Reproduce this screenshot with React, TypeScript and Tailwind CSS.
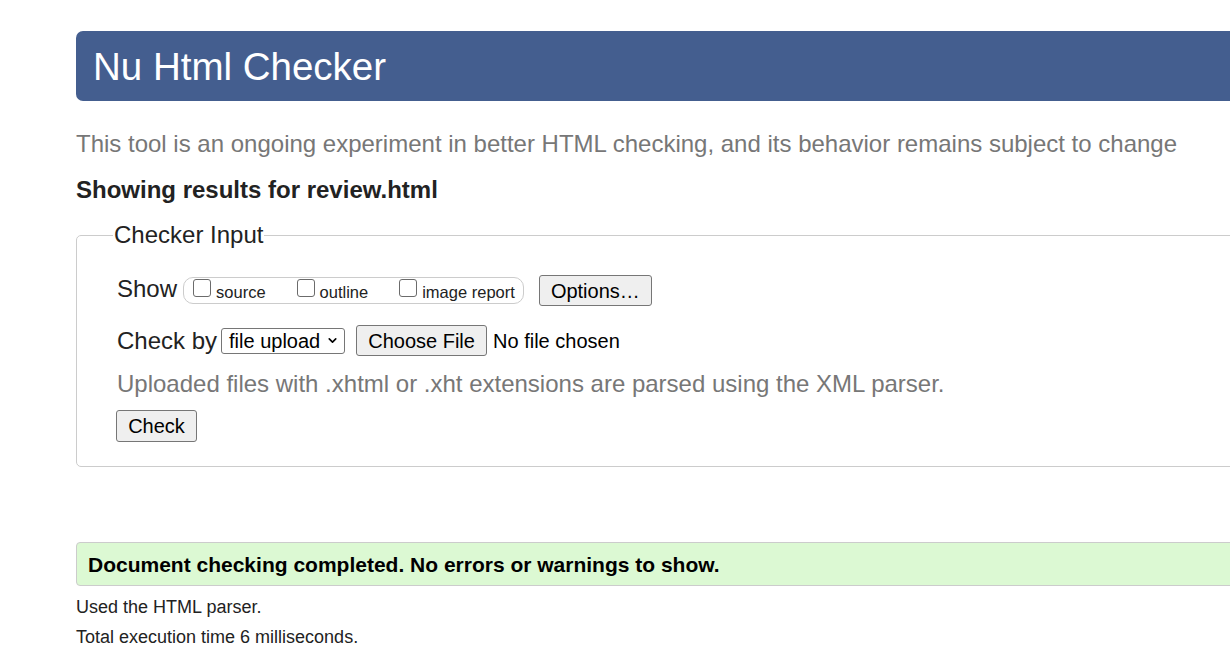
import { ChevronDown } from "lucide-react";

function Checkbox({ label }: { label: string }) {
  return (
    <span className="flex items-center gap-[5px]">
      <span className="w-[18px] h-[18px] border-[1.5px] border-[#6b6b6b] rounded-[3px] bg-white mb-[5px]"></span>
      <span className="text-[16.5px] leading-none mt-[4px]">{label}</span>
    </span>
  );
}

function Btn({ children, className = "" }: { children: React.ReactNode; className?: string }) {
  return (
    <span
      className={`flex items-center justify-center bg-[#efefef] border border-[#767676] rounded-[3px] text-[20px] text-black leading-none ${className}`}
    >
      {children}
    </span>
  );
}

export default function App() {
  return (
    <div className="w-[1230px] h-[657px] overflow-hidden bg-white font-['Liberation_Sans',Arial,sans-serif] text-[#222]">
      <div className="w-[1300px] pl-[76px] pt-[31px]">
        <h1 className="h-[70px] bg-[#445e8f] rounded-l-[7px] pl-[17px] pt-[3px] flex items-center text-white text-[38.5px] leading-none">
          Nu Html Checker
        </h1>

        <p className="mt-[31px] text-[24px] text-[#777] leading-none">
          This tool is an ongoing experiment in better HTML checking, and its behavior remains subject to change
        </p>

        <p className="mt-[22px] text-[24px] font-bold text-[#222] leading-none">Showing results for review.html</p>

        <fieldset className="mt-[21px] border border-[#ccc] rounded-[5px] pl-[40px] pb-[24px] pt-[12px]">
          <legend className="ml-[-4px] px-[1px] text-[24px] leading-none">Checker Input</legend>

          <div className="flex items-center mt-[16px]">
            <span className="text-[24px] leading-none mr-[6px] mb-[4px]">Show</span>
            <span className="flex items-center h-[27px] border border-[#ccc] rounded-[10px] pl-[9px] pr-[8px] gap-[31px] text-[#222]">
              <Checkbox label="source" />
              <Checkbox label="outline" />
              <Checkbox label="image report" />
            </span>
            <Btn className="ml-[15px] w-[113px] h-[31px]">Options…</Btn>
          </div>

          <div className="flex items-center mt-[19px]">
            <span className="text-[24px] leading-none mr-[4px]">Check by</span>
            <span className="flex items-center w-[124px] h-[26px] border border-[#767676] rounded-[3px] pl-[7px] pr-[5px] text-[20px] text-black leading-none">
              <span className="flex-1">file upload</span>
              <ChevronDown className="w-[13px] h-[13px]" strokeWidth={3} />
            </span>
            <Btn className="ml-[11px] w-[131px] h-[31px]">Choose File</Btn>
            <span className="ml-[6px] text-[20px] text-black leading-none">No file chosen</span>
          </div>

          <p className="mt-[16px] text-[24px] text-[#777] leading-none">
            Uploaded files with .xhtml or .xht extensions are parsed using the XML parser.
          </p>

          <div className="flex mt-[14px] -ml-[1px]">
            <Btn className="w-[81px] h-[32px]">Check</Btn>
          </div>
        </fieldset>

        <div className="mt-[75px] h-[44px] bg-[#dcf9d3] border border-[#ccc] rounded-l-[4px] pl-[11px] flex items-center text-[21px] font-bold text-black leading-none">
          Document checking completed. No errors or warnings to show.
        </div>

        <p className="mt-[12px] text-[18px] text-[#222] leading-none">Used the HTML parser.</p>
        <p className="mt-[12px] text-[18px] text-[#222] leading-none">Total execution time 6 milliseconds.</p>
      </div>
    </div>
  );
}
